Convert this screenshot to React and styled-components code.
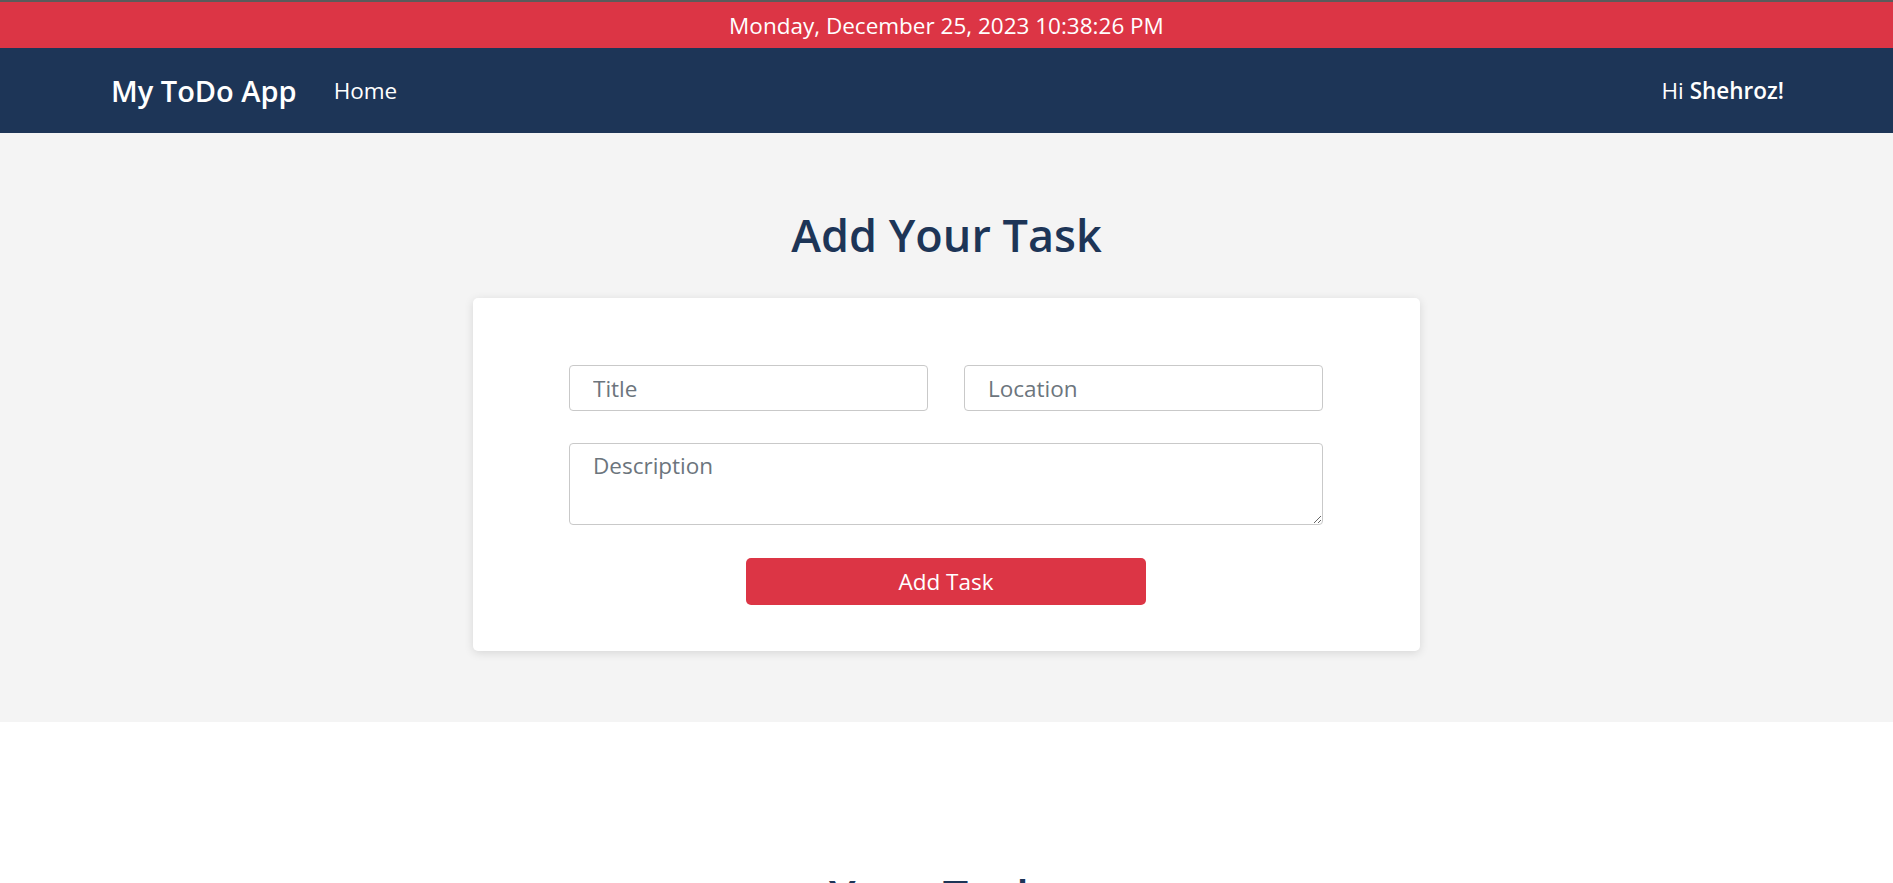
import React from 'react';
import styled, { createGlobalStyle } from 'styled-components';

const GlobalStyle = createGlobalStyle`
  * {
    box-sizing: border-box;
  }

  body {
    margin: 0;
    font-family: 'Open Sans', 'Noto Sans', sans-serif;
    color: #212529;
    background: #ffffff;
  }
`;

const DateBar = styled.div`
  height: 48px;
  border-top: 2px solid #5b5b5b;
  background: #dc3545;
  color: #ffffff;
  display: flex;
  align-items: center;
  justify-content: center;
  font-size: 22.5px;
`;

const Navbar = styled.nav`
  height: 85px;
  background: #1d3557;
  color: #ffffff;
  display: flex;
  align-items: center;
  justify-content: space-between;
  padding: 0 109px 0 111px;
`;

const NavLeft = styled.div`
  display: flex;
  align-items: center;
  gap: 37px;
`;

const Brand = styled.a`
  font-size: 29px;
  font-weight: 600;
  color: #ffffff;
  text-decoration: none;
`;

const NavLink = styled.a`
  font-size: 22.5px;
  color: #ffffff;
  text-decoration: none;
`;

const Greeting = styled.div`
  font-size: 22.5px;

  strong {
    font-weight: 600;
  }
`;

const Section = styled.section`
  background: ${({ $muted }) => ($muted ? '#f4f4f4' : '#ffffff')};
  padding: ${({ $pad }) => $pad};
  display: flex;
  flex-direction: column;
  align-items: center;
`;

const Heading = styled.h1`
  margin: 0;
  font-size: 45px;
  line-height: 58px;
  font-weight: 600;
  color: #1d3557;
`;

const Card = styled.form`
  width: 947px;
  margin-top: 34px;
  padding: 67px 97px 46px 96px;
  background: #ffffff;
  border-radius: 5px;
  box-shadow: 0 2px 10px rgba(0, 0, 0, 0.12);
  display: flex;
  flex-direction: column;
`;

const FieldRow = styled.div`
  display: grid;
  grid-template-columns: 1fr 1fr;
  gap: 36px;
`;

const fieldStyles = `
  width: 100%;
  border: 1px solid #c9c9c9;
  border-radius: 4px;
  background: #ffffff;
  font-family: 'Open Sans', 'Noto Sans', sans-serif;
  font-size: 22.5px;
  color: #212529;
  padding: 0 23px;
  outline: none;

  &::placeholder {
    color: #6c757d;
  }
`;

const Input = styled.input`
  ${fieldStyles}
  height: 46px;
`;

const TextArea = styled.textarea`
  ${fieldStyles}
  height: 82px;
  margin-top: 32px;
  padding-top: 7px;
  line-height: 30px;
  resize: vertical;
`;

const SubmitButton = styled.button`
  align-self: center;
  width: 400px;
  height: 47px;
  margin-top: 33px;
  border: none;
  border-radius: 5px;
  background: #dc3545;
  color: #ffffff;
  font-family: 'Open Sans', 'Noto Sans', sans-serif;
  font-size: 22.5px;
  cursor: pointer;
`;

const App = () => {
  const now = 'Monday, December 25, 2023 10:38:26 PM';

  return (
    <>
      <GlobalStyle />
      <DateBar>{now}</DateBar>
      <Navbar>
        <NavLeft>
          <Brand href="#">My ToDo App</Brand>
          <NavLink href="#">Home</NavLink>
        </NavLeft>
        <Greeting>
          Hi <strong>Shehroz!</strong>
        </Greeting>
      </Navbar>

      <Section $muted $pad="73px 0 71px">
        <Heading>Add Your Task</Heading>
        <Card onSubmit={(e) => e.preventDefault()}>
          <FieldRow>
            <Input type="text" placeholder="Title" />
            <Input type="text" placeholder="Location" />
          </FieldRow>
          <TextArea placeholder="Description" />
          <SubmitButton type="submit">Add Task</SubmitButton>
        </Card>
      </Section>

      <Section $pad="145px 0 60px">
        <Heading>Your Tasks</Heading>
      </Section>
    </>
  );
};

export default App;
